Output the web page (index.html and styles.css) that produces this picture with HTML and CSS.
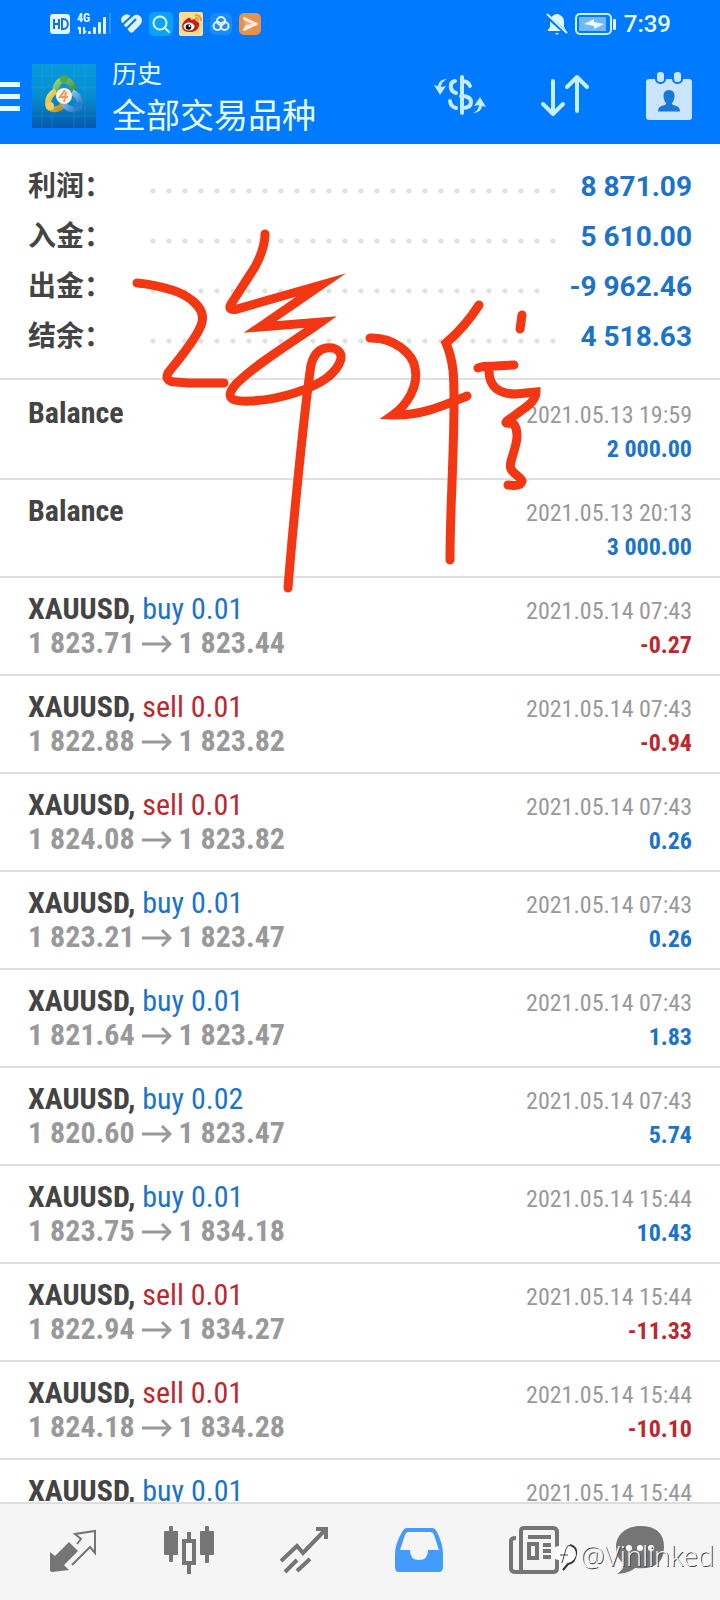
FILE: index.html
```html
<!DOCTYPE html>
<html lang="zh-CN">
<head>
<meta charset="utf-8">
<meta name="viewport" content="width=device-width, initial-scale=1">
<title>历史</title>
<link rel="stylesheet" href="styles.css">
</head>
<body>
<div class="app">
  <header class="header">
    <div class="status">
      <div class="status-group">
        <svg width="22" height="22" viewBox="0 0 22 22"><rect x="1" y="1" width="20" height="20" rx="3" fill="#dff5ff"/><path d="M5 6v10M10 6v10M5 11h5M13 6v10h1.500a3.500 4 0 0 0 0-10z" fill="none" stroke="#1670d8" stroke-width="2"/></svg>
        <div class="network">
          <span class="network-label">4G</span>
          <svg width="36" height="22" viewBox="0 0 36 22" fill="#dff5ff"><path d="M3 14v7M1 16l2-2M7 14v7M7 20l2-2" stroke="#dff5ff" stroke-width="2" fill="none"/><rect x="11" y="18" width="3" height="3" rx="1"/><rect x="16" y="14" width="3" height="7" rx="1"/><rect x="21" y="9" width="3" height="12" rx="1"/><rect x="26" y="4" width="3" height="17" rx="1"/><rect x="32" y="0" width="2" height="21" fill="#2f93ff"/></svg>
        </div>
        <svg width="22" height="22" viewBox="0 0 22 22"><path d="M11 4Q15 0 19 3q4 4 0 9l-7 7q-2 2-4-1L2 11q-4-5 0-8 4-4 9 1z" fill="#dff5ff"/><path d="M1 12L13 1M5 16L15 6" stroke="#007aff" stroke-width="2"/></svg>
        <svg width="24" height="24" viewBox="0 0 24 24"><rect width="24" height="24" rx="5" fill="#08a3ff"/><circle cx="11" cy="11" r="6.500" fill="none" stroke="#dff9ff" stroke-width="2"/><path d="M16 16l4 4" stroke="#dff9ff" stroke-width="2" stroke-linecap="round"/></svg>
        <svg width="24" height="24" viewBox="0 0 24 24"><rect width="24" height="24" rx="2" fill="#fbdc90"/><path d="M3 14Q4 9 9 6q3-1 3 2 5-2 5 1 4 1 3 5-2 6-9 6-8 0-8-6z" fill="#c91d16"/><ellipse cx="10" cy="14.500" rx="5.500" ry="4" fill="#fff"/><circle cx="9.500" cy="15" r="2.800" fill="#160d0c"/><circle cx="10.500" cy="14" r="1" fill="#fff"/><path d="M16 6q3 0 3 3M16 3q6 0 6 6" fill="none" stroke="#f39a28" stroke-width="2"/></svg>
        <svg width="24" height="24" viewBox="-1 -1 24 24"><rect width="22" height="22" rx="5" fill="#198aff"/><g fill="none" stroke="#dff5ff" stroke-width="2"><circle cx="11" cy="8" r="4"/><circle cx="7.500" cy="13" r="4"/><circle cx="14.500" cy="13" r="4"/></g></svg>
        <svg width="22" height="22" viewBox="0 0 22 22"><rect width="22" height="22" rx="5" fill="#e8914b"/><path d="M5 5l13 6-13 6 3-6z" fill="#ffe8d8" stroke="#ffe8d8" stroke-width="2" stroke-linejoin="round"/><path d="M5 7l8 4-6 1z" fill="#eda876"/></svg>
      </div>
      <div class="status-group">
        <svg width="22" height="22" viewBox="0 0 22 22"><path d="M2 18h18v-1l-2-3V9q0-5-4-7-3-2-6 0-4 2-4 7v5l-2 3zM9 20h4l-2 2z" fill="#dff9ff"/><path d="M0 2l20 18" stroke="#007aff" stroke-width="4"/><path d="M1 1l20 19" stroke="#dff9ff" stroke-width="2"/></svg>
        <svg width="44" height="22" viewBox="-1 0 44 22"><rect x="1" y="1" width="35" height="20" rx="4" fill="none" stroke="#c9f1ff" stroke-width="2"/><rect x="4" y="4" width="27" height="14" fill="#73b7ff"/><path d="M9 11l10-5v3l10 2-10 5v-3z" fill="#edfcff"/><rect x="38" y="6" width="3" height="11" rx="1" fill="#dff9ff"/></svg>
        <time>7:39</time>
      </div>
    </div>
    <div class="toolbar">
      <button class="menu" aria-label="菜单"><span></span><span></span><span></span></button>
      <svg class="logo" viewBox="0 0 64 64">
        <defs>
          <linearGradient id="sky" x1="0" y1="0" x2="0" y2="1"><stop offset="0" stop-color="#079bdc"/><stop offset=".5" stop-color="#078dd0"/><stop offset="1" stop-color="#0559aa"/></linearGradient>
          <linearGradient id="gold" x1="0" y1="0" x2="1" y2="1"><stop offset="0" stop-color="#f3df69"/><stop offset="1" stop-color="#b58b1d"/></linearGradient>
          <linearGradient id="leaf" x1="0" y1="0" x2="1" y2="1"><stop offset="0" stop-color="#9bd77b"/><stop offset="1" stop-color="#267f38"/></linearGradient>
          <linearGradient id="blue" x1="0" y1="0" x2="1" y2="1"><stop offset="0" stop-color="#a5defa"/><stop offset="1" stop-color="#1f72c4"/></linearGradient>
        </defs>
        <path d="M0 0h64v64H0z" fill="url(#sky)"/>
        <path d="M10 0v64M20 0v64M42 0v64M53 0v64M0 12h64M0 23h64M0 52h64" stroke="#2eaadf" stroke-opacity=".3"/>
        <g fill="none" stroke-width="6"><path d="M23 31q0-14 9-15 10 1 10 15" stroke="url(#leaf)"/><path d="M24 27q-8 4-8 13 0 6 9 5 5-1 6-5" stroke="url(#gold)"/><path d="M40 28q8 4 8 12 0 6-9 5-5-1-7-5" stroke="url(#blue)"/></g>
        <circle cx="32" cy="15" r="4" fill="#4da94a"/><circle cx="18" cy="42" r="4" fill="#f0d05a"/><circle cx="46" cy="42" r="4" fill="#2380ca"/>
        <circle cx="32" cy="32" r="8" fill="#f8f2e5"/><path d="M33 26l-5 7h8M34 28l-2 10" fill="none" stroke="#ed9860" stroke-width="2"/>
      </svg>
      <div class="titles"><p>历史</p><h1>全部交易品种</h1></div>
      <div class="actions">
        <button aria-label="货币"><svg width="52" height="48" viewBox="0 0 52 48" fill="none" stroke="#c5e9ff" stroke-width="4" stroke-linecap="round"><path d="M36 14q-2-5-8-5M21 9q-5 1-4 7 1 4 5 5M27 24q10 0 10 6t-9 6M16 29q1 6 6 7"/><path d="M28 5v36"/><path d="M13 7q-6 3-6 8l5-1-6 9-6-10 4 1q1-7 9-7zM39 41q6-3 6-8l-5 1 6-9 6 10-4-1q-1 7-9 7z" fill="#c5e9ff" stroke="none"/></svg></button>
        <button aria-label="排序"><svg width="50" height="48" viewBox="0 0 50 48" fill="none" stroke="#c5f0ff" stroke-width="4" stroke-linecap="round" stroke-linejoin="round"><path d="M12 9v33M2 32l10 10 10-10M36 39V5M26 15L36 5l10 10"/></svg></button>
        <button aria-label="日期"><svg width="46" height="48" viewBox="0 0 46 48"><rect y="7" width="46" height="41" rx="3" fill="#c9e5ff"/><g fill="#c9e5ff" stroke="#007aff" stroke-width="2"><rect x="10" y="-1" width="9" height="12" rx="4"/><rect x="27" y="-1" width="9" height="12" rx="4"/></g><path d="M23 18q6 0 5.500 7-.5 4-2.500 6 0 2 3 2.500 5 1 5 6H12q0-5 5-6 3-.5 3-2.500-2-2-2.500-6Q17 18 23 18z" fill="#1878d8"/></svg></button>
      </div>
    </div>
  </header>

  <main class="content">
    <dl class="summary">
      <div><dt>利润：</dt><dd class="dots" aria-hidden="true"></dd><dd>8 871.09</dd></div>
      <div><dt>入金：</dt><dd class="dots" aria-hidden="true"></dd><dd>5 610.00</dd></div>
      <div><dt>出金：</dt><dd class="dots" aria-hidden="true"></dd><dd>-9 962.46</dd></div>
      <div><dt>结余：</dt><dd class="dots" aria-hidden="true"></dd><dd>4 518.63</dd></div>
    </dl>
    <svg class="symbols" aria-hidden="true"><symbol id="arrow" viewBox="0 0 30 18"><path d="M0 9h28M20 1l8 8-8 8" fill="none" stroke="currentColor" stroke-width="3"/></symbol></svg>
    <ul class="deals">
      <li><div><b>Balance</b></div><div class="result"><time>2021.05.13 19:59</time><strong class="up">2 000.00</strong></div></li>
      <li><div><b>Balance</b></div><div class="result"><time>2021.05.13 20:13</time><strong class="up">3 000.00</strong></div></li>
      <li><div><p><b>XAUUSD,</b> <span class="up">buy 0.01</span></p><p class="prices">1 823.71 <svg><use href="#arrow"/></svg> 1 823.44</p></div><div class="result"><time>2021.05.14 07:43</time><strong class="down">-0.27</strong></div></li>
      <li><div><p><b>XAUUSD,</b> <span class="down">sell 0.01</span></p><p class="prices">1 822.88 <svg><use href="#arrow"/></svg> 1 823.82</p></div><div class="result"><time>2021.05.14 07:43</time><strong class="down">-0.94</strong></div></li>
      <li><div><p><b>XAUUSD,</b> <span class="down">sell 0.01</span></p><p class="prices">1 824.08 <svg><use href="#arrow"/></svg> 1 823.82</p></div><div class="result"><time>2021.05.14 07:43</time><strong class="up">0.26</strong></div></li>
      <li><div><p><b>XAUUSD,</b> <span class="up">buy 0.01</span></p><p class="prices">1 823.21 <svg><use href="#arrow"/></svg> 1 823.47</p></div><div class="result"><time>2021.05.14 07:43</time><strong class="up">0.26</strong></div></li>
      <li><div><p><b>XAUUSD,</b> <span class="up">buy 0.01</span></p><p class="prices">1 821.64 <svg><use href="#arrow"/></svg> 1 823.47</p></div><div class="result"><time>2021.05.14 07:43</time><strong class="up">1.83</strong></div></li>
      <li><div><p><b>XAUUSD,</b> <span class="up">buy 0.02</span></p><p class="prices">1 820.60 <svg><use href="#arrow"/></svg> 1 823.47</p></div><div class="result"><time>2021.05.14 07:43</time><strong class="up">5.74</strong></div></li>
      <li><div><p><b>XAUUSD,</b> <span class="up">buy 0.01</span></p><p class="prices">1 823.75 <svg><use href="#arrow"/></svg> 1 834.18</p></div><div class="result"><time>2021.05.14 15:44</time><strong class="up">10.43</strong></div></li>
      <li><div><p><b>XAUUSD,</b> <span class="down">sell 0.01</span></p><p class="prices">1 822.94 <svg><use href="#arrow"/></svg> 1 834.27</p></div><div class="result"><time>2021.05.14 15:44</time><strong class="down">-11.33</strong></div></li>
      <li><div><p><b>XAUUSD,</b> <span class="down">sell 0.01</span></p><p class="prices">1 824.18 <svg><use href="#arrow"/></svg> 1 834.28</p></div><div class="result"><time>2021.05.14 15:44</time><strong class="down">-10.10</strong></div></li>
      <li><div><p><b>XAUUSD,</b> <span class="up">buy 0.01</span></p></div><div class="result"><time>2021.05.14 15:44</time></div></li>
    </ul>
  </main>

  <nav class="tabs">
    <button aria-label="行情"><svg viewBox="0 0 48 48" fill="#757575"><path d="M0 26l5 4 14-14 9 9-14 14 5 5-17 2q-2 0-2-2z"/><path d="M22 39L40 21l5 6V5L25 8l6 5-4 5" fill="none" stroke="#757575" stroke-width="2"/></svg></button>
    <button aria-label="图表"><svg viewBox="0 0 50 48" fill="#757575"><rect y="5" width="14" height="24" rx="1"/><rect x="5" width="4" height="36" rx="1"/><rect x="36" y="5" width="14" height="24" rx="1"/><rect x="41" width="4" height="37" rx="1"/><path d="M18 13h5V6h4v7h5v26h-5v9h-4v-9h-5zM22 17v18h6V17z" fill-rule="evenodd"/></svg></button>
    <button aria-label="交易"><svg viewBox="0 0 48 48" fill="none" stroke="#757575" stroke-width="4"><path d="M1 35l16-15 6 7L45 4M36 3h10v10M5 46l12-12M17 45l13-12"/></svg></button>
    <button aria-label="历史" aria-current="page"><svg viewBox="0 0 48 48"><path d="M12 2h25q3 0 5 4 6 12 6 22v13q0 5-4 5H4q-4 0-4-5V28Q0 18 7 6q2-4 5-4z" fill="#429cff"/><path d="M13 6h22q3 0 4 3l5 15H33q0 10-9 10t-9-10H5l5-15q1-3 3-3z" fill="#f5f5f5"/></svg></button>
    <button aria-label="新闻"><svg viewBox="0 0 50 48" fill="none" stroke="#757575" stroke-width="4"><path d="M12 46V5q0-3 3-3h29q4 0 4 4v36q0 4-4 4H7q-5 0-5-4V15q0-3 5-3M19 11h23M34 19h8M34 25h8M34 31h8"/><path d="M20 18h8v14h-8z"/></svg></button>
    <button aria-label="消息"><svg viewBox="0 0 48 48"><path d="M24 0C10 0 0 9 0 21q0 11 8 17 0 5-7 10 13-1 18-6 29 3 29-21Q48 0 24 0z" fill="#757575"/><g fill="#fff"><circle cx="13" cy="22" r="3"/><circle cx="24" cy="22" r="3"/><circle cx="35" cy="22" r="3"/></g></svg></button>
  </nav>

  <div class="watermark">
    <svg width="26" height="30" viewBox="0 0 26 30"><path d="M16 4q7 2 6 9-1 9-8 10l-5 6" fill="none" stroke="#333" stroke-width="2"/><circle cx="14" cy="13" r="8" fill="#fff"/><circle cx="5" cy="12" r="7" fill="#fff"/><path d="M7 28l5-6-3-4z" fill="#fff"/><path d="M8 22l4-14q1-4 5-4M6 14h8" fill="none" stroke="#444" stroke-width="1"/></svg>
    <span>@Vinlinked</span>
  </div>

  <svg class="scribble" viewBox="0 0 720 1600" aria-hidden="true">
    <path d="M137 283C150 284 162 287 172 290 185 294 206 306 202 322 199 337 173 366 168 373 165 379 169 382 176 382L188 383 224 383"/>
    <path d="M265 234Q265 248 255 267L231 304Q227 311 237 309L321 285 260 327 321 322C296 340 258 362 236 384 224 398 231 402 250 401 281 400 314 388 328 377 341 366 347 352 333 348 321 346 314 353 311 365 305 404 293 524 288 588"/>
    <path d="M370 338C394 337 413 354 415 368 419 386 407 405 393 415 421 416 445 405 467 396"/>
    <path d="M479 305Q465 327 446 343C454 362 454 378 454 402 454 456 450 510 450 560"/>
    <path d="M522 315L520 329"/>
    <path d="M478 368Q482 366 495 366L514 365M489 368C488 388 500 394 516 394L536 392Q536 401 522 410L507 421Q504 424 510 423 C514 423 517 427 517 437 516 451 508 463 511 469 513 474 520 476 522 481Q521 487 508 485"/>
  </svg>
</div>
</body>
</html>
```
FILE: styles.css
```css
* { box-sizing: border-box; }
body, p, h1, ul, dl, dd { margin: 0; }
body {
  background: #fff;
  color: #444;
  font-family: Roboto, "Noto Sans CJK SC", sans-serif;
}
button { padding: 0; border: 0; background: none; font: inherit; }
svg { display: block; flex: none; }
.app {
  position: relative;
  display: flex;
  flex-direction: column;
  height: 100vh;
}

.header { flex: none; background: #007aff; color: #e4fcff; }
.status {
  display: flex;
  align-items: center;
  justify-content: space-between;
  height: 48px;
  padding: 0 49px;
  font-size: 24px;
  font-weight: 500;
}
.status-group { display: flex; align-items: center; gap: 6px; }
.network { position: relative; margin-right: 2px; }
.network-label {
  position: absolute;
  top: -2px;
  left: 0;
  font: bold 12px/14px "Roboto Condensed", "Liberation Sans Narrow", Roboto, sans-serif;
}
.toolbar { display: flex; align-items: center; height: 96px; padding-right: 28px; }
.menu { display: grid; gap: 7px; width: 20px; margin-right: 12px; }
.menu span { height: 5px; background: #dcffff; }
.logo { width: 64px; height: 64px; margin-right: 16px; }
.titles { padding-top: 10px; font-size: 25px; line-height: 30px; white-space: nowrap; }
.titles h1 { font-size: 34px; line-height: 52px; font-weight: 400; }
.actions { display: flex; gap: 55px; margin-left: auto; }

.content { flex: 1; min-height: 0; overflow: hidden; }
.summary {
  padding: 18px 28px 16px;
  border-bottom: 2px solid #e0e0e0;
  font-size: 28px;
  line-height: 50px;
  font-weight: 700;
}
.summary > div { display: flex; }
.summary dt { width: 117px; }
.summary dd { color: #1b74c9; }
.summary .dots {
  flex: 1;
  margin-right: 20px;
  background: radial-gradient(circle, #e0e0e0 2px, transparent 3px) 0 21px / 16px 16px repeat-x;
}

.symbols { width: 0; height: 0; }
.deals {
  padding: 0;
  list-style: none;
  font-family: "Roboto Condensed", "Liberation Sans Narrow", Roboto, sans-serif;
  font-size: 30px;
  line-height: 34px;
}
.deals li {
  display: flex;
  justify-content: space-between;
  padding: 14px 28px 10px;
  border-bottom: 2px solid #e0e0e0;
}
.deals li:first-child { padding-top: 16px; }
.prices { color: #999; font-weight: 700; }
.prices svg { display: inline-block; width: 30px; height: 18px; }
.result {
  display: grid;
  padding: 2px 0;
  font-size: 24px;
  text-align: right;
}
.result time { color: #999; }
.up { color: #1b74c9; }
.down { color: #bd272d; }

.tabs {
  display: grid;
  grid-template-columns: repeat(5, 115fr) 97fr;
  flex: none;
  padding: 22px 32px 26px 16px;
  border-top: 2px solid #ddd;
  background: #f5f5f5;
}
.tabs button { display: grid; justify-content: center; }
.tabs svg { height: 48px; }

.watermark {
  position: absolute;
  right: 6px;
  bottom: 26px;
  display: flex;
  align-items: center;
  color: #f5f5f5;
  font: 300 27px/36px "Open Sans", "Noto Sans", sans-serif;
  text-shadow: 1px 1px 0 #444;
}
.scribble {
  position: absolute;
  top: 0;
  left: 0;
  width: 100%;
  fill: none;
  stroke: #f33713;
  stroke-width: 9;
  stroke-linecap: round;
  stroke-linejoin: miter;
  stroke-miterlimit: 10;
  pointer-events: none;
}
```
